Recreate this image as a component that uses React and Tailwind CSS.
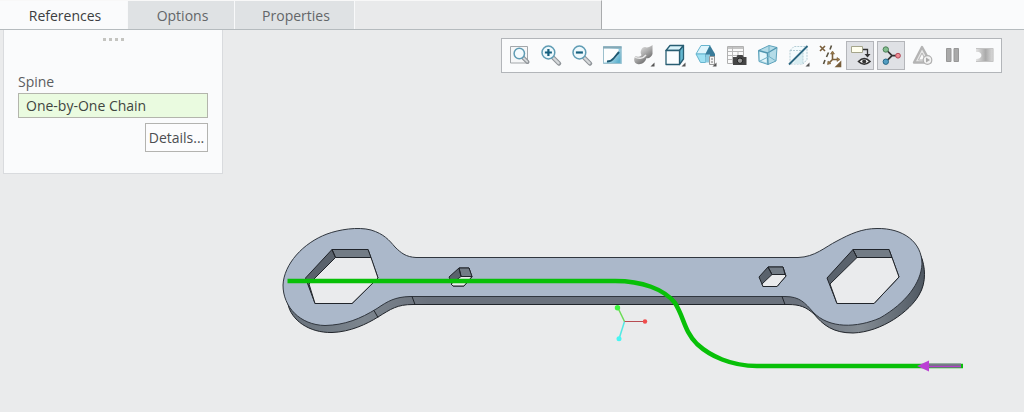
import { useState } from 'react';

const tabs = ['References', 'Options', 'Properties'];

const tabWidths = {
  References: 'w-32',
  Options: 'w-[107px]',
  Properties: 'w-[120px]',
};

const Lens = ({ children }) => (
  <>
    <path d="M17 16.5L23 22.5" stroke="#8f9499" strokeWidth="4.5" strokeLinecap="round" />
    <path d="M17.5 17L22.6 22.1" stroke="#d5d8da" strokeWidth="2.2" strokeLinecap="round" />
    <circle cx="12.4" cy="11.5" r="6.4" fill="#eef9fd" stroke="#5f9cb4" strokeWidth="1.5" />
    {children}
  </>
);

const More = () => <path d="M25.5 21.5v4h-4z" fill="#555" />;

const tools = [
  {
    name: 'Refit',
    icon: (
      <>
        <path d="M5.5 5.5h17v16.5h-17z" fill="#f6f7f8" stroke="#a3a7aa" />
        <path d="M18 16.5l4.500 4.500" stroke="#8f9499" strokeWidth="4" strokeLinecap="round" />
        <path d="M18.5 17l3.700 3.700" stroke="#d5d8da" strokeWidth="1.8" strokeLinecap="round" />
        <circle cx="14.3" cy="12.5" r="5.2" fill="#f4fbfe" stroke="#5f9cb4" strokeWidth="1.5" />
      </>
    ),
  },
  {
    name: 'Zoom In',
    icon: <Lens><path d="M12.4 8v7M8.9 11.5h7" stroke="#17607f" strokeWidth="2.2" /></Lens>,
  },
  {
    name: 'Zoom Out',
    icon: <Lens><path d="M8.9 11.5h7" stroke="#17607f" strokeWidth="2.2" /></Lens>,
  },
  {
    name: 'Repaint',
    icon: (
      <>
        <defs>
          <linearGradient id="repaint" x1="0" y1="0" x2="1" y2="0.6">
            <stop offset="0.3" stopColor="#e3f4fa" />
            <stop offset="1" stopColor="#5fb2cf" />
          </linearGradient>
        </defs>
        <path d="M5 5h18.5v18H5z" fill="url(#repaint)" />
        <path d="M6 8h14.5c1 6-4 11-8 12l-6.500 1z" fill="#fdfefe" />
        <path d="M5.5 5.5h17.500v17H5.500z" fill="none" stroke="#9cc0cd" />
        <path d="M5 6.500h18.500" stroke="#86a9b6" strokeWidth="2" />
        <path d="M9 20.500c3 0 5-1 7-3.500l5-6" fill="none" stroke="#1d5972" strokeWidth="2" />
      </>
    ),
  },
  {
    name: 'Render Style',
    icon: (
      <>
        <defs>
          <linearGradient id="render" x1="0" y1="0" x2="0.7" y2="1">
            <stop offset="0.2" stopColor="#dedede" />
            <stop offset="0.55" stopColor="#acacac" />
            <stop offset="1" stopColor="#5c5c5c" />
          </linearGradient>
        </defs>
        <path d="M16 6c2 1 5 0 7.500-2v9c-1 3-4 5-6 4-1 4-5 7-9 6-4-.5-4-6-2-8 2 1 5 1 6-1-2-3 0-8 3.500-8z" fill="url(#render)" />
        <path d="M6 16c3 2 8 2 11-2" fill="none" stroke="#e8e8e8" strokeWidth="1.5" />
        <More />
      </>
    ),
  },
  {
    name: 'Display Style',
    icon: (
      <g strokeLinejoin="round">
        <path d="M6 9.500l4-5h13.500l-4 5z" fill="#d9f3fa" stroke="#285e73" strokeWidth="1.3" />
        <path d="M19.500 9.500l4-5V18l-4 5.500z" fill="#65b8d0" stroke="#285e73" strokeWidth="1.3" />
        <path d="M6 9.500h13.500v14H6z" fill="#fbfeff" stroke="#285e73" strokeWidth="1.3" />
        <More />
      </g>
    ),
  },
  {
    name: 'Saved Orientations',
    icon: (
      <>
        <path d="M10 4.500h9l-4 8.500H5z" fill="#dff5fc" stroke="#68b5cf" />
        <path d="M5 13h9.500v8.500H9.500z" fill="#9fe1f3" stroke="#68b5cf" />
        <path d="M14.500 13l4.500-8.500 5 8.500v3h-9.500z" fill="#397b99" />
        <path d="M14.500 13.500h4.500v8h-4.500z" fill="#8ccbe0" />
        <path d="M18.500 15.500h5v8h-5z" fill="#f3f3f3" stroke="#999" />
        <path d="M20 18h2M20 21h2" stroke="#777" />
        <More />
      </>
    ),
  },
  {
    name: 'View Manager',
    icon: (
      <>
        <path d="M5.500 5.500h16v17h-16z" fill="#fafafa" stroke="#b0b0b0" />
        <path d="M6 7h15" stroke="#c4c4c4" strokeWidth="2" />
        <path d="M6 10.500h15M6 14.500h15M6 18.500h8M10.500 6v16M16 10v4" stroke="#b8b8b8" />
        <path d="M11 16h3.500l1-2h5l1 2h3v8H11z" fill="#454545" />
        <circle cx="18" cy="19.700" r="2.700" fill="#999" stroke="#222" />
      </>
    ),
  },
  {
    name: 'Perspective View',
    icon: (
      <g strokeLinejoin="round" fill="none">
        <path d="M5.500 9.500L16 4.500l8 2-1 13.500-8 3.500-9-3z" fill="#b4dce8" stroke="#5ea3bc" />
        <path d="M7 11l6.500 1.500v9L7 19.500z" fill="#e4f6fb" />
        <path d="M5.500 9.500l9 2.500 9.500-5.500M14.500 12l.5 11.500" stroke="#4f95af" strokeWidth="1.4" />
        <path d="M16 4.500v11l-10 5M16 15.500l7 4.500" stroke="#6fb0c6" />
      </g>
    ),
  },
  {
    name: 'Section Display',
    icon: (
      <>
        <path d="M6 9.500l4-4h13v13l-4 4.500H6z" fill="#f4fbfd" stroke="#b5cdd5" strokeDasharray="2 1" />
        <path d="M12 18l7-7v12H9z" fill="#d9edf2" />
        <path d="M6 9.500h13V23M19 9.500l4-4" fill="none" stroke="#b5cdd5" strokeDasharray="2 1" />
        <path d="M5 23.500L23.500 5" stroke="#2b6680" strokeWidth="1.8" />
        <More />
      </>
    ),
  },
  {
    name: 'Datum Display Filters',
    icon: (
      <g fill="none" stroke="#7a5f3b" strokeWidth="1.6">
        <path d="M5 5l5 5M10 5l-5 5" />
        <path d="M16.500 4.500l-1.500 4M13.500 11.500l-2 4.500M10 19l-1.500 4" stroke="#58513f" />
        <path d="M17.500 11v7.500h6M17.500 18.500l-3.500 3.500" />
        <path d="M15.500 13l2-3 2 3zM22 16.500l3 2-3 2zM13 20l-.5 3.500 3.500-1z" fill="#9a7b4c" strokeWidth="0.6" />
        <More />
      </g>
    ),
  },
  {
    name: 'Annotation Display',
    pressed: true,
    icon: (
      <>
        <path d="M5.500 5.500h11v6h-11z" fill="#ffffef" stroke="#a5a58b" />
        <path d="M17 8.500h4.500v6" fill="none" stroke="#333" strokeWidth="1.3" />
        <path d="M18.500 13h6l-3 3.500z" fill="#333" />
        <path d="M12.500 20.500q5.700-6 11.500 0q-5.800 5.500-11.500 0z" fill="#f2f2f2" stroke="#333" strokeWidth="1.6" />
        <circle cx="18.2" cy="20.4" r="2" fill="#333" />
      </>
    ),
  },
  {
    name: 'Spin Center',
    pressed: true,
    icon: (
      <>
        <path d="M9 8.500l6 6.200h6M15 14.700l-6 6" fill="none" stroke="#333" strokeWidth="1.7" />
        <circle cx="8.8" cy="8.5" r="2.7" fill="#83bd8e" stroke="#4c7f57" />
        <circle cx="21" cy="14.7" r="2.4" fill="#ef8d96" stroke="#b34957" />
        <circle cx="8.8" cy="20.7" r="2.7" fill="#529dc2" stroke="#266786" />
      </>
    ),
  },
  {
    name: 'Simulate',
    icon: (
      <>
        <path d="M14 6l8.500 15.500H6z" fill="#e6e6e6" stroke="#b4b4b4" strokeWidth="2.4" strokeLinejoin="round" />
        <path d="M14 12l3.500 7h-7z" fill="#fafafa" stroke="#b5b5b5" />
        <circle cx="19.5" cy="19" r="4.3" fill="#f2f2f2" stroke="#b0b0b0" strokeWidth="1.2" />
        <path d="M18 16.500l4 2.500-4 2.500z" fill="#aaa" />
      </>
    ),
  },
  {
    name: 'Pause Simulation',
    icon: <path d="M7.500 7.500h4.500v13H7.500zM15 7.500h4.500v13H15z" fill="#a9a9a9" stroke="#989898" />,
  },
  {
    name: 'Results',
    icon: (
      <>
        <defs>
          <linearGradient id="results">
            <stop offset="0" stopColor="#e4e4e4" />
            <stop offset="0.55" stopColor="#aaa" />
            <stop offset="1" stopColor="#ddd" />
          </linearGradient>
        </defs>
        <path d="M6 7h17.500v14H6v-3c6 0 7-5 3-7H6z" fill="url(#results)" />
        <path d="M6 7.500h17v13H6" fill="none" stroke="#c4c4c4" />
      </>
    ),
  },
];

const Toolbar = () => (
  <div
    role="toolbar"
    aria-label="Graphics"
    className="mt-2 mr-[22px] flex gap-[3px] border border-[#b2b5b9] bg-[#fafbfc] px-[3px] py-[2px]"
  >
    {tools.map(({ name, icon, pressed }) => (
      <button
        key={name}
        type="button"
        aria-label={name}
        aria-pressed={Boolean(pressed)}
        className={`h-[29px] w-7 border ${pressed ? 'border-[#b4b6ba] bg-[#dfe1e5]' : 'border-transparent'}`}
      >
        <svg viewBox="1 1 26 27" className="h-[27px] w-[26px]">{icon}</svg>
      </button>
    ))}
  </div>
);

const ReferencesPanel = () => (
  <section className="ml-[3px] flex w-[220px] flex-col border border-t-0 border-[#d9dbde] bg-[#fafbfc] px-3.5 pb-[21px]">
    <div className="flex h-5 justify-center gap-[3px] pt-2">
      <span className="h-[3px] w-[3px] bg-[#c4c4c0]" />
      <span className="h-[3px] w-[3px] bg-[#c4c4c0]" />
      <span className="h-[3px] w-[3px] bg-[#c4c4c0]" />
      <span className="h-[3px] w-[3px] bg-[#c4c4c0]" />
    </div>
    <label htmlFor="spine" className="mt-[22px] leading-5 text-[#5b5d60]">Spine</label>
    <input
      id="spine"
      readOnly
      defaultValue="One-by-One Chain"
      className="mt-[1px] h-[25px] w-full border border-[#b3b5ac] bg-[#eafbe0] px-[7px] text-[#3f4540]"
    />
    <button
      type="button"
      className="mt-[5px] h-[29px] w-[63px] self-end border border-[#b3b3b0] bg-[#fcfcfd] text-[#4c4e51]"
    >
      Details...
    </button>
  </section>
);

const Hexagon = ({ outer, top, inner, edge }) => (
  <g stroke="#20242a" strokeLinejoin="round">
    <polygon points={outer} fill="#5a626c" />
    <polygon points={top} fill="#737c86" />
    <polygon points={inner} fill="#eaebed" />
    <path d={edge} />
  </g>
);

const Model = () => (
  <svg viewBox="0 174 1024 238" className="block w-full" role="img" aria-label="Wrench model">
    <defs>
      <linearGradient id="side">
        <stop offset="0" stopColor="#68717b" />
        <stop offset="0.12" stopColor="#7c858e" />
        <stop offset="0.22" stopColor="#6b727d" />
        <stop offset="0.8" stopColor="#6b727d" />
        <stop offset="0.9" stopColor="#838b93" />
        <stop offset="1" stopColor="#4f5862" />
      </linearGradient>
    </defs>
    <path
      d="M288 304C291 320 309 333 332 332.500C350 332 367 324 378 317C391 309 397 304.500 413 304.500H788C800 304.500 806 307 814 314C823 325 833 333 853 333C882 332 910 311 919 295C927 282 925 266 921 256L910 250L800 285H400Z"
      fill="url(#side)"
      stroke="#20242a"
    />
    <path
      d="M416 257.500H798C815 257 825 247 837 241C850 234 862 228.500 877 228.500C903 228 922 242 922 264C921 283 906 303 880 318C857 328 829 329 813 312C805 303 800 296.500 785 296.500H410C395 297 388 301 377 308.500C360 319 345 325 325 325.500C300 325 283 307 283 285C284 264 303 243 327 234C339 229.500 358 226.500 371 230C384 234 389 240 395 247C401 253 406 257 416 257.500Z"
      fill="#abb8ca"
      stroke="#30363e"
    />
    <path d="M374 310.500l4 7M412 296.500l3 8M782 296.500l3 8" stroke="#20242a" fill="none" />

    <Hexagon
      outer="332,249.500 368,249.500 378,278 352,303.500 315,303.500 305.500,278"
      top="332,249.500 368,249.500 371,257.500 335.500,257.500"
      inner="335.500,257.500 371,257.500 378,278 352,303.500 315,303.500 309,284"
      edge="M332 249.500l3.500 8"
    />
    <Hexagon
      outer="853,249.500 889,249.500 899,277 874,303.500 837,303.500 827,278"
      top="853,249.500 889,249.500 892,257.500 857,257.500"
      inner="857,257.500 892,257.500 899,277 874,303.500 837,303.500 830,284"
      edge="M853 249.500l4 8"
    />
    <Hexagon
      outer="459,268 469,268 472,277 464,286 453,286 449,277"
      top="459,268 469,268 472,276.500 461,276.500"
      inner="461,276.500 472,276.500 464,286 453,286 451,284"
      edge="M459 268l2 8"
    />
    <Hexagon
      outer="768,267 783,267 786,276 777,286.500 763,286.500 759,277"
      top="768,267 783,267 785,274.500 772,274.500"
      inner="772,274.500 785,274.500 786,276 777,286.500 763,286.500 762,284"
      edge="M768 267l4 7.500"
    />

    <path
      d="M287.500 281H615C642 281 664 289 675 303C684 317 684 331 697 344C710 356 731 366 757 366H963"
      fill="none"
      stroke="#08c008"
      strokeWidth="4.500"
    />
    <path d="M929 364.500H961" stroke="#777c88" strokeWidth="2" />
    <path d="M929 366.500H961" stroke="#b540cc" strokeWidth="2" />
    <path d="M917 366l12-5.500v11z" fill="#bb40d4" />

    <path d="M624.500 321.500L618 308" stroke="#6bdc55" strokeWidth="1.5" />
    <path d="M624.500 321.500L619 339" stroke="#53e8e3" strokeWidth="1.5" />
    <path d="M624.500 321.500H645" stroke="#b74c52" />
    <circle cx="617.5" cy="307.7" r="2.7" fill="#3cf43c" />
    <circle cx="619" cy="338.7" r="2.5" fill="#47f6f3" />
    <circle cx="645" cy="321.5" r="2.2" fill="#f04c4c" />
  </svg>
);

export default function App() {
  const [active, setActive] = useState('References');

  return (
    <div className="min-h-screen bg-[#eaebec] font-['Open_Sans','Noto_Sans',sans-serif] text-sm">
      <header className="flex h-[30px] border-b border-[#b5bbbe] bg-[#fafbfc]">
        <div role="tablist" className="flex w-[58.8%] border-t border-r border-t-[#f8f8f8] border-r-[#a9abad] bg-[#e9eaeb]">
          {tabs.map((tab) => (
            <button
              key={tab}
              type="button"
              role="tab"
              aria-selected={active === tab}
              onClick={() => setActive(tab)}
              className={`${tabWidths[tab]} border-r border-[#f8f9fa] pt-[2px] pl-[3px] ${
                active === tab ? 'bg-[#fafbfc] text-[#3c3e41]' : 'bg-[#dfe2e4] text-[#636669]'
              }`}
            >
              {tab}
            </button>
          ))}
        </div>
      </header>
      <main>
        <div className="flex items-start justify-between">
          <ReferencesPanel />
          <Toolbar />
        </div>
        <Model />
      </main>
    </div>
  );
}
